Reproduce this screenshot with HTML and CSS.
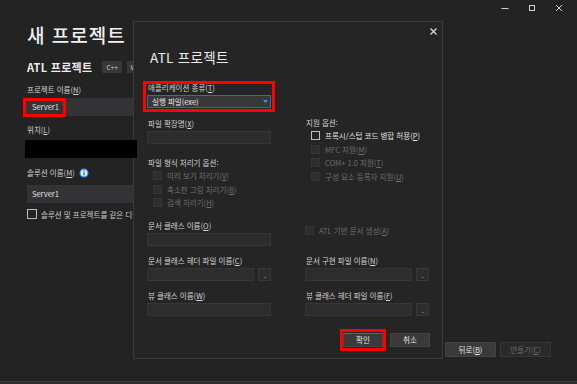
FILE: index.html
```html
<!DOCTYPE html>
<html lang="ko">
<head>
<meta charset="utf-8">
<title>새 프로젝트</title>
<link rel="stylesheet" href="styles.css">
</head>
<body>
<div class="app">
  <div class="titlebar">
    <span class="winbtn">
      <svg width="8" height="8" viewBox="0 0 8 8"><line x1="0.5" y1="4.5" x2="7.5" y2="4.5" stroke="#cfcfcf" stroke-width="1"/></svg>
    </span>
    <span class="winbtn">
      <svg width="8" height="8" viewBox="0 0 8 8"><rect x="1.5" y="1.5" width="5" height="5" fill="none" stroke="#cfcfcf" stroke-width="1"/></svg>
    </span>
    <span class="winbtn">
      <svg width="8" height="8" viewBox="0 0 8 8"><path d="M1 1L7 7M7 1L1 7" stroke="#cfcfcf" stroke-width="1"/></svg>
    </span>
  </div>
  <div class="main">
    <h1 class="page-title">새 프로젝트</h1>
    <div class="template-row">
      <span class="template-name">ATL 프로젝트</span>
      <span class="tag">C++</span>
      <span class="tag">Windows</span>
    </div>
    <div class="bg-label lbl-name">프로젝트 이름(<u>N</u>)</div>
    <div class="bg-input bg-input-wide">Server1</div>
    <div class="bg-label lbl-loc">위치(<u>L</u>)</div>
    <div class="bg-input bg-input-loc"></div>
    <div class="bg-label lbl-sol"><span>솔루션 이름(<u>M</u>)</span>
      <svg class="info" width="10" height="10" viewBox="0 0 10 10"><circle cx="5" cy="5" r="4.5" fill="#3794ff"/><circle cx="5" cy="5" r="3.3" fill="#e8f2ff"/><rect x="4.3" y="4.2" width="1.4" height="3.3" fill="#1a73d9"/><rect x="4.3" y="2.4" width="1.4" height="1.2" fill="#1a73d9"/></svg>
    </div>
    <div class="bg-input bg-input-sol">Server1</div>
    <div class="bg-check">
      <span class="cb cb-on"></span>
      <span>솔루션 및 프로젝트를 같은 디렉터리에 배치(<u>D</u>)</span>
    </div>
  </div>
  <div class="footer">
    <span class="btn btn-back">뒤로(<u>B</u>)</span>
    <span class="btn btn-disabled">만들기(<u>C</u>)</span>
  </div>
  <div class="taskbar"></div>

  <div class="dialog">
    <div class="dlg-close">
      <svg width="7" height="7" viewBox="0 0 7 7"><path d="M0.5 0.5L6.5 6.5M6.5 0.5L0.5 6.5" stroke="#d6d6d6" stroke-width="1.3"/></svg>
    </div>
    <div class="dlg-title">ATL 프로젝트</div>
    <div class="dlg-body">
      <div class="col">
        <div class="lbl mt16">애플리케이션 종류(<u>T</u>)</div>
        <div class="select">
          <span>실행 파일(exe)</span>
          <svg class="arrow" width="5" height="3" viewBox="0 0 5 3"><path d="M0 0H5L2.5 3Z" fill="#3794ff"/></svg>
        </div>
        <div class="lbl mt10">파일 확장명(<u>X</u>)</div>
        <div class="field"></div>
        <div class="lbl mt13">파일 형식 처리기 옵션:</div>
        <div class="check sub disabled"><span class="cb"></span><span>미리 보기 처리기(<u>V</u>)</span></div>
        <div class="check sub disabled"><span class="cb"></span><span>축소판 그림 처리기(<u>B</u>)</span></div>
        <div class="check sub disabled"><span class="cb"></span><span>검색 처리기(<u>H</u>)</span></div>
        <div class="lbl mt10">문서 클래스 이름(<u>O</u>)</div>
        <div class="field"></div>
        <div class="lbl mt9">문서 클래스 헤더 파일 이름(<u>C</u>)</div>
        <div class="field-row"><div class="field grow"></div><span class="browse">...</span></div>
        <div class="lbl mt9">뷰 클래스 이름(<u>W</u>)</div>
        <div class="field"></div>
      </div>
      <div class="col">
        <div class="lbl mt51">지원 옵션:</div>
        <div class="check sub"><span class="cb cb-on"></span><span>프록시/스텁 코드 병합 허용(<u>P</u>)</span></div>
        <div class="check sub disabled"><span class="cb"></span><span>MFC 지원(<u>M</u>)</span></div>
        <div class="check sub disabled"><span class="cb"></span><span>COM+ 1.0 지원(<u>T</u>)</span></div>
        <div class="check sub disabled"><span class="cb"></span><span>구성 요소 등록자 지원(<u>U</u>)</span></div>
        <div class="check disabled mt40"><span class="cb"></span><span>ATL 기반 문서 생성(<u>A</u>)</span></div>
        <div class="lbl mt18">문서 구현 파일 이름(<u>N</u>)</div>
        <div class="field-row"><div class="field grow"></div><span class="browse">...</span></div>
        <div class="lbl mt9">뷰 클래스 헤더 파일 이름(<u>F</u>)</div>
        <div class="field-row"><div class="field grow"></div><span class="browse">...</span></div>
      </div>
    </div>
    <div class="dlg-buttons">
      <span class="btn dlg-btn btn-ok">확인</span>
      <span class="btn dlg-btn">취소</span>
    </div>
  </div>

  <div class="redact"></div>
  <div class="mark mark-name"></div>
  <div class="mark mark-type"></div>
  <div class="mark mark-ok"></div>
</div>
</body>
</html>
```

FILE: styles.css
```css
* { box-sizing: border-box; }
html, body { margin: 0; padding: 0; }
body {
  width: 577px;
  height: 384px;
  overflow: hidden;
  background: #232323;
  font-family: "Noto Sans CJK KR", "Noto Sans", sans-serif;
  color: #d8d8d8;
}
u { text-decoration: underline; text-underline-offset: 1px; }

.app {
  position: relative;
  width: 577px;
  height: 384px;
  display: flex;
  flex-direction: column;
}

.titlebar {
  height: 16px;
  display: flex;
  justify-content: flex-end;
  align-items: center;
  padding-right: 5px;
}
.winbtn {
  width: 27px;
  height: 14px;
  display: flex;
  align-items: center;
  justify-content: center;
}

.main {
  width: 133px;
  overflow: hidden;
  padding-left: 27px;
  display: flex;
  flex-direction: column;
  align-items: flex-start;
}
.page-title {
  margin: 7px 0 0 0;
  font-size: 19px;
  line-height: 24px;
  font-weight: 500;
  color: #f0f0f0;
  letter-spacing: 1px;
  white-space: nowrap;
}
.template-row {
  margin-top: 13px;
  height: 14px;
  display: flex;
  align-items: center;
  gap: 5px;
  white-space: nowrap;
}
.template-name {
  font-size: 11px;
  font-weight: 700;
  color: #ececec;
  margin-right: 5px;
  letter-spacing: 0.3px;
}
.tag {
  height: 12px;
  line-height: 12px;
  padding: 0 4px;
  font-size: 6.5px;
  background: #383838;
  color: #cfcfcf;
  border-radius: 1px;
  flex-shrink: 0;
}

.bg-label {
  height: 12px;
  line-height: 12px;
  font-size: 7.5px;
  color: #cfcfcf;
  white-space: nowrap;
  display: flex;
  align-items: center;
}
.lbl-name { margin-top: 10px; }
.lbl-loc { margin-top: 8px; }
.lbl-sol { margin-top: 9px; }
.info { margin-left: 4px; }

.bg-input {
  height: 18px;
  line-height: 18px;
  background: #333335;
  font-size: 7.5px;
  color: #e0e0e0;
  padding-left: 7px;
  margin-left: -2px;
  width: 200px;
  flex-shrink: 0;
}
.bg-input-wide { margin-top: 2px; }
.bg-input-loc { margin-top: 4px; }
.bg-input-sol { margin-top: 6px; margin-left: 0; padding-left: 5px; }

.bg-check {
  margin-top: 6px;
  height: 10px;
  display: flex;
  align-items: center;
  gap: 4px;
  font-size: 7.5px;
  color: #c8c8c8;
  white-space: nowrap;
}

.cb {
  width: 10px;
  height: 10px;
  flex: 0 0 10px;
  background: #2e2e2e;
  border: 1px solid #353535;
}
.cb-on {
  background: transparent;
  border: 1px solid #bdbdbd;
}

.footer {
  margin-top: auto;
  padding-right: 26px;
  padding-bottom: 24px;
  display: flex;
  justify-content: flex-end;
  gap: 4px;
}
.btn {
  height: 15px;
  line-height: 13px;
  width: 51px;
  text-align: center;
  font-size: 7.5px;
  border: 1px solid #444;
  background: #3a3a3a;
  color: #e6e6e6;
}
.btn-disabled {
  background: #2a2a2a;
  border-color: #363636;
  color: #6a6a6a;
}
.taskbar {
  height: 3px;
  background: #2c2c2c;
  border-top: 1px solid #3d3d3d;
}

/* dialog overlay */
.dialog {
  position: absolute;
  left: 133px;
  top: 21px;
  width: 310px;
  height: 338px;
  background: #252526;
  border: 1px solid #3a3a3a;
  padding: 0 13px 11px 13px;
  display: flex;
  flex-direction: column;
}
.dlg-close {
  height: 18px;
  display: flex;
  justify-content: flex-end;
  align-items: center;
  margin-right: -8px;
}
.dlg-title {
  margin-top: 8px;
  height: 18px;
  line-height: 18px;
  font-size: 13.5px;
  color: #ececec;
  padding-left: 3px;
  letter-spacing: 0.3px;
  white-space: nowrap;
}
.dlg-body {
  display: flex;
  gap: 34px;
}
.col {
  width: 124px;
  display: flex;
  flex-direction: column;
}
.lbl {
  height: 12px;
  line-height: 12px;
  font-size: 7.5px;
  color: #d2d2d2;
  padding-left: 1px;
  white-space: nowrap;
}
.mt9 { margin-top: 9px; }
.mt10 { margin-top: 10px; }
.mt13 { margin-top: 13px; }
.mt16 { margin-top: 16px; }
.mt18 { margin-top: 18px; }
.mt40 { margin-top: 40.5px; }
.mt51 { margin-top: 51px; }

.select {
  margin-top: 1px;
  height: 13px;
  background: #38383a;
  border: 1px solid #1f6fc4;
  display: flex;
  align-items: center;
  justify-content: space-between;
  padding: 0 2px 0 4px;
  font-size: 7.5px;
  color: #e6e6e6;
  white-space: nowrap;
}
.field {
  margin-top: 1px;
  height: 13px;
  background: #2d2d2d;
  border: 1px solid #363636;
}
.field-row {
  margin-top: 1px;
  display: flex;
  gap: 4px;
}
.field-row .field { margin-top: 0; }
.grow { flex: 1; }
.browse {
  width: 13px;
  height: 13px;
  background: #2d2d2d;
  border: 1px solid #383838;
  font-size: 6px;
  line-height: 13px;
  color: #8a8a8a;
  text-align: center;
  letter-spacing: -1px;
}

.check {
  height: 13.5px;
  display: flex;
  align-items: center;
  gap: 5px;
  font-size: 7.5px;
  color: #e0e0e0;
  white-space: nowrap;
}
.check.sub { padding-left: 6px; }
.check.disabled { color: #6e6e6e; }
.check .cb { width: 9px; height: 9px; flex-basis: 9px; }

.dlg-buttons {
  margin-top: auto;
  display: flex;
  justify-content: flex-end;
  gap: 7px;
  margin-right: -1px;
}
.dlg-btn {
  width: 40px;
  height: 14px;
  line-height: 12px;
}
.btn-ok { border-top-color: #4a6b8a; }

/* overlays on the screenshot */
.redact {
  position: absolute;
  left: 25px;
  top: 140px;
  width: 112px;
  height: 18px;
  background: #000;
}
.mark {
  position: absolute;
  border: 3px solid #ff0000;
}
.mark-name { left: 23px; top: 98px; width: 43px; height: 19px; }
.mark-type { left: 143px; top: 81px; width: 132px; height: 31px; }
.mark-ok { left: 340px; top: 329px; width: 46px; height: 22px; }
```
